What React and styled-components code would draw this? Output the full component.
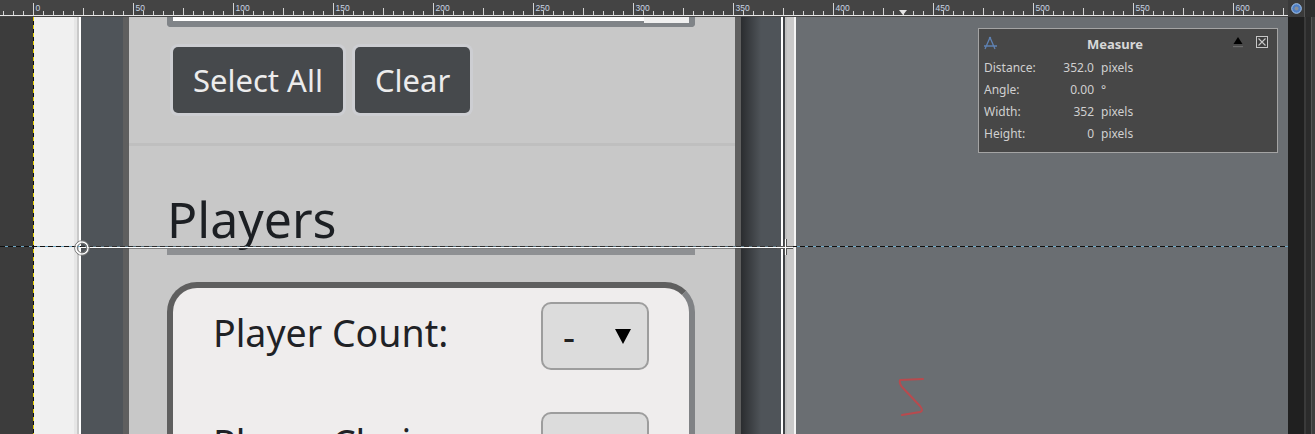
import React from "react";
import styled, { createGlobalStyle } from "styled-components";

const Global = createGlobalStyle`
  html, body { margin: 0; padding: 0; background: #3c3c3c; overflow: hidden; }
  * { box-sizing: border-box; }
`;

const Screen = styled.div`
  width: 1315px;
  height: 434px;
  display: flex;
  flex-direction: column;
  overflow: hidden;
  background: #3c3c3c;
  font-family: "Noto Sans", sans-serif;
`;

const TopBar = styled.div`
  display: flex;
  height: 17px;
  flex: none;
  background: #444444;
`;

const RulerBox = styled.div`
  width: 1288px;
  height: 17px;
  line-height: 0;
`;

const NavCorner = styled.div`
  width: 16px;
  display: flex;
  align-items: center;
  justify-content: center;
  background: #3a3a3a;
`;

const DockTop = styled.div`
  flex: 1;
  background: #2e2e2e;
  border-left: 1px solid #555;
`;

const Workspace = styled.div`
  flex: 1;
  display: flex;
  min-height: 0;
`;

const Canvas = styled.div`
  position: relative;
  width: 1288px;
  display: flex;
  overflow: hidden;
`;

const OuterPad = styled.div`
  width: 33px;
  background: #3c3c3c;
`;

const LayerEdge = styled.div`
  width: 1px;
  background: repeating-linear-gradient(to bottom, #e6d000 0 4px, #111 4px 8px);
`;

const BrowserEdge = styled.div`
  width: 47px;
  background: linear-gradient(to right, #f0f0f0 0 40px, #e6e6e6 40px 43px, #c9c9c9 43px 45px, #ffffff 45px 47px);
`;

const Gutter = styled.div`
  width: 42px;
  background: #4f5459;
`;

const Panel = styled.div`
  width: 618px;
  background: #c8c8c8;
  border-left: 6px solid #5f5f5f;
  border-right: 6px solid #5f5f5f;
  display: flex;
  flex-direction: column;
  overflow: hidden;
`;

const PanelShadow = styled.div`
  width: 40px;
  background: linear-gradient(to right, #2a2c2f, #4f5459 20px);
`;

const FrameEdge = styled.div`
  width: 15px;
  background: linear-gradient(to right, #ffffff 0 2px, #3f4246 2px 4px, #c0c0c0 4px 6px, #c9c9c9 6px 13px, #f4f4f4 13px 15px);
`;

const Backdrop = styled.div`
  flex: 1;
  background: #6a6e72;
`;

const Scrollbar = styled.div`
  width: 16px;
  background: #202020;
`;

const DockEdge = styled.div`
  flex: 1;
  background: linear-gradient(to right, #3a3a3a 0 2px, #2b2b2b 2px 7px, #555 7px 8px, #3e3e3e 8px);
`;

/* ---- page panel content ---- */

const TopSection = styled.section`
  padding: 0 40px 30px 38px;
  border-bottom: 3px solid #bfbfbf;
`;

const TextareaStub = styled.div`
  height: 10px;
  border: 6px solid #808488;
  border-top: 0;
  border-radius: 0 0 4px 4px;
  background: #ffffff;
  display: flex;
  justify-content: flex-end;
`;

const ResizeCorner = styled.div`
  width: 45px;
  height: 6px;
  background: #f0f0f0;
`;

const ButtonRow = styled.div`
  display: flex;
  gap: 12px;
  padding-left: 6px;
  margin-top: 20px;
`;

const ActionButton = styled.button`
  height: 66px;
  padding: 0 20px;
  border: 0;
  border-radius: 5px;
  background: #46494c;
  color: #ececec;
  font: 400 31px/1 "Noto Sans", sans-serif;
  box-shadow: 0 0 0 3px #cdced2;
`;

const PlayersSection = styled.section`
  padding: 48px 40px 0 38px;
`;

const Heading = styled.h2`
  margin: 0;
  font: 400 50px/50px "Noto Sans", sans-serif;
  color: #1c1f23;
  padding-bottom: 5px;
  border-bottom: 6px solid #8e9093;
`;

const Card = styled.div`
  margin-top: 27px;
  height: 400px;
  border: 6px solid;
  border-color: #5f5f5f #808285 #808285 #5f5f5f;
  border-radius: 30px;
  background: #efeded;
  padding: 14px 40px 0 40px;
  display: flex;
  flex-direction: column;
  gap: 42px;
`;

const FieldRow = styled.div`
  display: flex;
  align-items: center;
  justify-content: space-between;
  height: 68px;
`;

const FieldLabel = styled.span`
  font-size: 37.5px;
  color: #1f2226;
  padding-bottom: 8px;
`;

const SelectBox = styled.div`
  width: 108px;
  height: 68px;
  border: 2px solid #9d9d9d;
  border-radius: 10px;
  background: #dcdcdc;
  display: flex;
  align-items: center;
  justify-content: space-between;
  padding: 0 16px 0 20px;
  font-size: 37.5px;
  color: #222;
`;

/* ---- overlays ---- */

const GuideLine = styled.div`
  position: absolute;
  left: 0;
  right: 0;
  top: 229px;
  height: 1px;
  background: repeating-linear-gradient(to right, #111 0 5px, #6fa9c6 5px 8px);
`;

const MeasureLine = styled.div`
  position: absolute;
  left: 81px;
  width: 705px;
  top: 229px;
  height: 3px;
  background: linear-gradient(to bottom, rgba(70, 70, 70, 0.55) 0 1px, #ffffff 1px 2px, rgba(70, 70, 70, 0.55) 2px 3px);
`;

const Marker = styled.svg`
  position: absolute;
  overflow: visible;
`;

const MeasureDialog = styled.div`
  position: absolute;
  left: 978px;
  top: 11px;
  width: 300px;
  height: 125px;
  border: 1px solid #a4a4a4;
  background: #474747;
  color: #d0d0d0;
  font-family: "Noto Sans", sans-serif;
  font-size: 12px;
`;

const DialogHeader = styled.div`
  height: 28px;
  padding: 7px 9px 0 4px;
  display: flex;
  align-items: flex-start;
`;

const DialogTitle = styled.div`
  flex: 1;
  text-align: center;
  font-weight: 700;
  font-size: 13px;
  line-height: 16px;
  color: #d8d8d8;
`;

const HeaderIcon = styled.svg`
  display: block;
  flex: none;
`;

const ReadoutGrid = styled.div`
  display: grid;
  grid-template-columns: 63px 40px auto;
  column-gap: 7px;
  padding-left: 5px;
  line-height: 22px;
`;

const ReadoutValue = styled.span`
  text-align: right;
`;

function Ruler() {
  const ticks = [];
  for (let x = 3.5; x < 1288; x += 10) {
    const v = Math.round((x - 33.5) / 2);
    let y1 = 11;
    if (v % 50 === 0) y1 = 3;
    else if (v % 25 === 0) y1 = 8;
    ticks.push(<line key={x} x1={x} x2={x} y1={y1} y2={15} />);
  }
  const labels = [];
  for (let v = 0; v <= 600; v += 50) {
    labels.push(
      <text key={v} x={33.5 + 2 * v + 2} y={11}>
        {v}
      </text>
    );
  }
  return (
    <svg width="1288" height="17" viewBox="0 0 1288 17">
      <rect x="0" y="0" width="1288" height="17" fill="#444444" />
      <g stroke="#d4d4d4" strokeWidth="1">{ticks}</g>
      <line x1="0" x2="1288" y1="15.5" y2="15.5" stroke="#e6e6e6" strokeWidth="1" />
      <g fill="#c9d4e3" fontFamily="Liberation Sans, sans-serif" fontSize="8.5">
        {labels}
      </g>
      <polygon points="899,10 907,10 903,15" fill="#e4e4e4" />
    </svg>
  );
}

export default function App() {
  return (
    <Screen>
      <Global />
      <TopBar>
        <RulerBox>
          <Ruler />
        </RulerBox>
        <NavCorner>
          <svg width="11" height="11" viewBox="0 0 11 11">
            <circle cx="5.5" cy="5.5" r="4.8" fill="#4f7fc4" stroke="#a9cbf3" strokeWidth="1" />
            <circle cx="5.5" cy="5.5" r="2" fill="#8a8f96" />
          </svg>
        </NavCorner>
        <DockTop />
      </TopBar>
      <Workspace>
        <Canvas>
          <OuterPad />
          <LayerEdge />
          <BrowserEdge />
          <Gutter />
          <Panel>
            <TopSection>
              <TextareaStub>
                <ResizeCorner />
              </TextareaStub>
              <ButtonRow>
                <ActionButton>Select All</ActionButton>
                <ActionButton>Clear</ActionButton>
              </ButtonRow>
            </TopSection>
            <PlayersSection>
              <Heading>Players</Heading>
              <Card>
                <FieldRow>
                  <FieldLabel>Player Count:</FieldLabel>
                  <SelectBox>
                    <span>-</span>
                    <svg width="16" height="16" viewBox="0 0 16 16">
                      <polygon points="0,1 16,1 8,16" fill="#000" />
                    </svg>
                  </SelectBox>
                </FieldRow>
                <FieldRow>
                  <FieldLabel>Player Choice:</FieldLabel>
                  <SelectBox />
                </FieldRow>
              </Card>
            </PlayersSection>
          </Panel>
          <PanelShadow />
          <FrameEdge />
          <Backdrop />

          <GuideLine />
          <MeasureLine />
          <Marker width="18" height="18" viewBox="0 0 18 18" style={{ left: 72.5, top: 221.5 }}>
            <circle cx="9" cy="9" r="7.3" fill="none" stroke="#777" strokeWidth="1" />
            <circle cx="9" cy="9" r="6" fill="none" stroke="#fff" strokeWidth="1.4" />
            <circle cx="9" cy="9" r="4.7" fill="none" stroke="#777" strokeWidth="1" />
          </Marker>
          <Marker width="18" height="18" viewBox="0 0 18 18" style={{ left: 776, top: 221 }}>
            <path d="M1 9.5 H17 M9.5 1 V17" stroke="#555" strokeWidth="3" />
            <path d="M1 9.5 H17 M9.5 1 V17" stroke="#fff" strokeWidth="1" />
          </Marker>
          <Marker width="32" height="44" viewBox="0 0 32 44" style={{ left: 895, top: 358 }}>
            <path
              d="M28 4 L5 5 Q4 8 7 12 L25 31 Q29 36 25 37 L7 40"
              fill="none"
              stroke="#b84a4e"
              strokeWidth="2"
              strokeLinecap="round"
              strokeLinejoin="round"
            />
          </Marker>

          <MeasureDialog>
            <DialogHeader>
              <HeaderIcon width="15" height="14" viewBox="0 0 15 14">
                <path d="M7 1.5 L2 13 M7 1.5 L12 13 M1 10 H14" fill="none" stroke="#5f82b3" strokeWidth="1.3" />
                <circle cx="7" cy="2" r="1.2" fill="#5f82b3" />
              </HeaderIcon>
              <DialogTitle>Measure</DialogTitle>
              <HeaderIcon width="12" height="12" viewBox="0 0 12 12" style={{ marginRight: 12 }}>
                <polygon points="1.5,8 10.5,8 6,1" fill="#000" />
                <rect x="1" y="10" width="10" height="1.2" fill="#6a6a6a" />
              </HeaderIcon>
              <HeaderIcon width="12" height="12" viewBox="0 0 12 12">
                <rect x="0.5" y="0.5" width="11" height="11" fill="#3e3e3e" stroke="#c8c8c8" />
                <path d="M2.5 2.5 L9.5 9.5 M9.5 2.5 L2.5 9.5" stroke="#c8c8c8" strokeWidth="1.1" />
              </HeaderIcon>
            </DialogHeader>
            <ReadoutGrid>
              <span>Distance:</span>
              <ReadoutValue>352.0</ReadoutValue>
              <span>pixels</span>
              <span>Angle:</span>
              <ReadoutValue>0.00</ReadoutValue>
              <span>°</span>
              <span>Width:</span>
              <ReadoutValue>352</ReadoutValue>
              <span>pixels</span>
              <span>Height:</span>
              <ReadoutValue>0</ReadoutValue>
              <span>pixels</span>
            </ReadoutGrid>
          </MeasureDialog>
        </Canvas>
        <Scrollbar />
        <DockEdge />
      </Workspace>
    </Screen>
  );
}
